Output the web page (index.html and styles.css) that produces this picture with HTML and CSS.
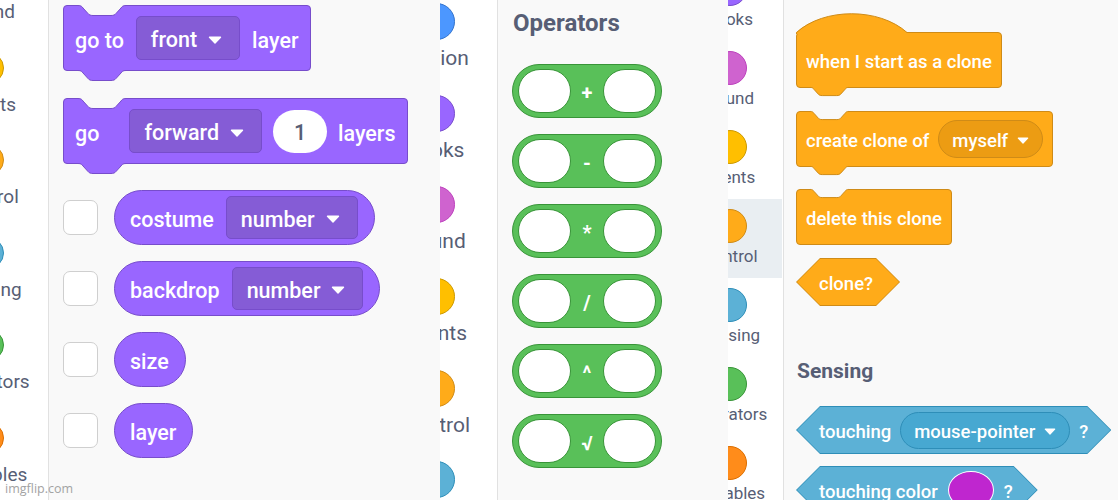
FILE: index.html
```html
<!DOCTYPE html>
<html>
<head>
<meta charset="utf-8">
<title>Scratch blocks</title>
<link rel="stylesheet" href="styles.css">
</head>
<body>
<main class="collage">

  <!-- Shot 1: Looks -->
  <section class="shot s1">
    <nav class="cats">
      <div class="cat"><span class="dot sound"></span><span class="lbl">Sound</span></div>
      <div class="cat"><span class="dot events"></span><span class="lbl">Events</span></div>
      <div class="cat"><span class="dot control"></span><span class="lbl">Control</span></div>
      <div class="cat"><span class="dot sensing"></span><span class="lbl">Sensing</span></div>
      <div class="cat"><span class="dot operators"></span><span class="lbl">Operators</span></div>
      <div class="cat"><span class="dot variables"></span><span class="lbl">Variables</span></div>
    </nav>
    <div class="ws">
      <div class="stack looks b-goto">
        <svg class="notch top" viewBox="0 0 48 11" preserveAspectRatio="none"><path class="nf" d="M0,0 H48 V0.5 C45,0.5 44,1.5 43,3 L38,8.5 C37,9.8 35.5,10.5 33,10.5 H15 C12.5,10.5 11,9.8 10,8.5 L5,3 C4,1.5 3,0.5 0,0.5 Z"/><path class="nl" d="M0,0.5 C3,0.5 4,1.5 5,3 L10,8.5 C11,9.8 12.5,10.5 15,10.5 H33 C35.5,10.5 37,9.8 38,8.5 L43,3 C44,1.5 45,0.5 48,0.5"/></svg>
        <span class="t">go to</span>
        <span class="dd">front <svg class="arr" viewBox="0 0 14 8"><path d="M1.5 1.2h11L7 7z"/></svg></span>
        <span class="t">layer</span>
        <svg class="notch bot" viewBox="0 0 48 11" preserveAspectRatio="none"><path class="nf" d="M0,0 H48 V0.5 C45,0.5 44,1.5 43,3 L38,8.5 C37,9.8 35.5,10.5 33,10.5 H15 C12.5,10.5 11,9.8 10,8.5 L5,3 C4,1.5 3,0.5 0,0.5 Z"/><path class="nl" d="M0,0.5 C3,0.5 4,1.5 5,3 L10,8.5 C11,9.8 12.5,10.5 15,10.5 H33 C35.5,10.5 37,9.8 38,8.5 L43,3 C44,1.5 45,0.5 48,0.5"/></svg>
      </div>
      <div class="stack looks b-go">
        <svg class="notch top" viewBox="0 0 48 11" preserveAspectRatio="none"><path class="nf" d="M0,0 H48 V0.5 C45,0.5 44,1.5 43,3 L38,8.5 C37,9.8 35.5,10.5 33,10.5 H15 C12.5,10.5 11,9.8 10,8.5 L5,3 C4,1.5 3,0.5 0,0.5 Z"/><path class="nl" d="M0,0.5 C3,0.5 4,1.5 5,3 L10,8.5 C11,9.8 12.5,10.5 15,10.5 H33 C35.5,10.5 37,9.8 38,8.5 L43,3 C44,1.5 45,0.5 48,0.5"/></svg>
        <span class="t wide">go</span>
        <span class="dd">forward <svg class="arr" viewBox="0 0 14 8"><path d="M1.5 1.2h11L7 7z"/></svg></span>
        <span class="num">1</span>
        <span class="t">layers</span>
        <svg class="notch bot" viewBox="0 0 48 11" preserveAspectRatio="none"><path class="nf" d="M0,0 H48 V0.5 C45,0.5 44,1.5 43,3 L38,8.5 C37,9.8 35.5,10.5 33,10.5 H15 C12.5,10.5 11,9.8 10,8.5 L5,3 C4,1.5 3,0.5 0,0.5 Z"/><path class="nl" d="M0,0.5 C3,0.5 4,1.5 5,3 L10,8.5 C11,9.8 12.5,10.5 15,10.5 H33 C35.5,10.5 37,9.8 38,8.5 L43,3 C44,1.5 45,0.5 48,0.5"/></svg>
      </div>
      <div class="rows">
        <div class="row"><span class="chk"></span><div class="rep looks"><span class="t">costume</span><span class="dd">number <svg class="arr" viewBox="0 0 14 8"><path d="M1.5 1.2h11L7 7z"/></svg></span></div></div>
        <div class="row"><span class="chk"></span><div class="rep looks"><span class="t">backdrop</span><span class="dd">number <svg class="arr" viewBox="0 0 14 8"><path d="M1.5 1.2h11L7 7z"/></svg></span></div></div>
        <div class="row"><span class="chk"></span><div class="rep looks"><span class="t">size</span></div></div>
        <div class="row"><span class="chk"></span><div class="rep looks"><span class="t">layer</span></div></div>
      </div>
    </div>
    <span class="watermark">imgflip.com</span>
  </section>

  <!-- Shot 2: Operators -->
  <section class="shot s2">
    <nav class="cats">
      <div class="cat"><span class="dot motion"></span><span class="lbl">Motion</span></div>
      <div class="cat"><span class="dot looks-c"></span><span class="lbl">Looks</span></div>
      <div class="cat"><span class="dot sound"></span><span class="lbl">Sound</span></div>
      <div class="cat"><span class="dot events"></span><span class="lbl">Events</span></div>
      <div class="cat"><span class="dot control"></span><span class="lbl">Control</span></div>
      <div class="cat"><span class="dot sensing"></span><span class="lbl">Sensing</span></div>
    </nav>
    <div class="ws">
      <h2 class="title">Operators</h2>
      <div class="ops">
        <div class="op"><span class="slot"></span><span class="sym">+</span><span class="slot"></span></div>
        <div class="op"><span class="slot"></span><span class="sym">-</span><span class="slot"></span></div>
        <div class="op"><span class="slot"></span><span class="sym">*</span><span class="slot"></span></div>
        <div class="op"><span class="slot"></span><span class="sym">/</span><span class="slot"></span></div>
        <div class="op"><span class="slot"></span><span class="sym">^</span><span class="slot"></span></div>
        <div class="op"><span class="slot"></span><span class="sym">√</span><span class="slot"></span></div>
      </div>
    </div>
  </section>

  <!-- Shot 3: Control / Sensing -->
  <section class="shot s3">
    <nav class="cats">
      <div class="cat"><span class="dot looks-c"></span><span class="lbl">Looks</span></div>
      <div class="cat"><span class="dot sound"></span><span class="lbl">Sound</span></div>
      <div class="cat"><span class="dot events"></span><span class="lbl">Events</span></div>
      <div class="cat sel"><span class="dot control"></span><span class="lbl">Control</span></div>
      <div class="cat"><span class="dot sensing"></span><span class="lbl">Sensing</span></div>
      <div class="cat"><span class="dot operators"></span><span class="lbl">Operators</span></div>
      <div class="cat"><span class="dot variables"></span><span class="lbl">Variables</span></div>
    </nav>
    <div class="ws">
      <div class="stack control hat">
        <svg class="cap" viewBox="0 0 111 21"><path class="cf" d="M0,21 L0,19.5 C28,-5.5 83,-5.5 111,19.5 L111,21 Z"/><path class="cl" d="M0.5,21 L0.5,19.5 C28,-5.5 83,-5.5 111,19.5"/></svg>
        <span class="t">when I start as a clone</span>
        <svg class="notch bot" viewBox="0 0 48 11" preserveAspectRatio="none"><path class="nf" d="M0,0 H48 V0.5 C45,0.5 44,1.5 43,3 L38,8.5 C37,9.8 35.5,10.5 33,10.5 H15 C12.5,10.5 11,9.8 10,8.5 L5,3 C4,1.5 3,0.5 0,0.5 Z"/><path class="nl" d="M0,0.5 C3,0.5 4,1.5 5,3 L10,8.5 C11,9.8 12.5,10.5 15,10.5 H33 C35.5,10.5 37,9.8 38,8.5 L43,3 C44,1.5 45,0.5 48,0.5"/></svg>
      </div>
      <div class="stack control b-create">
        <svg class="notch top" viewBox="0 0 48 11" preserveAspectRatio="none"><path class="nf" d="M0,0 H48 V0.5 C45,0.5 44,1.5 43,3 L38,8.5 C37,9.8 35.5,10.5 33,10.5 H15 C12.5,10.5 11,9.8 10,8.5 L5,3 C4,1.5 3,0.5 0,0.5 Z"/><path class="nl" d="M0,0.5 C3,0.5 4,1.5 5,3 L10,8.5 C11,9.8 12.5,10.5 15,10.5 H33 C35.5,10.5 37,9.8 38,8.5 L43,3 C44,1.5 45,0.5 48,0.5"/></svg>
        <span class="t">create clone of</span>
        <span class="dd pill">myself <svg class="arr" viewBox="0 0 14 8"><path d="M1.5 1.2h11L7 7z"/></svg></span>
        <svg class="notch bot" viewBox="0 0 48 11" preserveAspectRatio="none"><path class="nf" d="M0,0 H48 V0.5 C45,0.5 44,1.5 43,3 L38,8.5 C37,9.8 35.5,10.5 33,10.5 H15 C12.5,10.5 11,9.8 10,8.5 L5,3 C4,1.5 3,0.5 0,0.5 Z"/><path class="nl" d="M0,0.5 C3,0.5 4,1.5 5,3 L10,8.5 C11,9.8 12.5,10.5 15,10.5 H33 C35.5,10.5 37,9.8 38,8.5 L43,3 C44,1.5 45,0.5 48,0.5"/></svg>
      </div>
      <div class="stack control b-delete">
        <svg class="notch top" viewBox="0 0 48 11" preserveAspectRatio="none"><path class="nf" d="M0,0 H48 V0.5 C45,0.5 44,1.5 43,3 L38,8.5 C37,9.8 35.5,10.5 33,10.5 H15 C12.5,10.5 11,9.8 10,8.5 L5,3 C4,1.5 3,0.5 0,0.5 Z"/><path class="nl" d="M0,0.5 C3,0.5 4,1.5 5,3 L10,8.5 C11,9.8 12.5,10.5 15,10.5 H33 C35.5,10.5 37,9.8 38,8.5 L43,3 C44,1.5 45,0.5 48,0.5"/></svg>
        <span class="t">delete this clone</span>
      </div>
      <div class="bool control b-clone"><span class="t">clone?</span></div>
      <h2 class="title">Sensing</h2>
      <div class="bool sensing b-touch">
        <span class="t">touching</span>
        <span class="dd pill">mouse-pointer <svg class="arr" viewBox="0 0 14 8"><path d="M1.5 1.2h11L7 7z"/></svg></span>
        <span class="t">?</span>
      </div>
      <div class="bool sensing b-color">
        <span class="t">touching color</span>
        <span class="swatch"></span>
        <span class="t">?</span>
      </div>
    </div>
  </section>

</main>
</body>
</html>
```

FILE: styles.css
```css
* { box-sizing: border-box; }

body {
  margin: 0;
  font-family: Roboto, "Liberation Sans", sans-serif;
  background: #f9f9f9;
}

.collage {
  display: flex;
  width: 1118px;
  height: 500px;
  overflow: hidden;
}

.shot {
  position: relative;
  display: flex;
  height: 500px;
  overflow: hidden;
  flex: none;
}
.s1 { width: 440px; }
.s2 { width: 288px; }
.s3 { width: 390px; }

/* ---------- category strips ---------- */
.cats {
  flex: none;
  display: flex;
  flex-direction: column;
  background: #fff;
  border-right: 1px solid #e1e1e1;
  overflow: hidden;
}
.cat {
  flex: none;
  display: flex;
  flex-direction: column;
  align-items: center;
}
.dot {
  flex: none;
  border-radius: 50%;
  border: 1px solid;
}
.lbl {
  color: #575e75;
  white-space: nowrap;
}

.dot.motion    { background: #4c97ff; border-color: #3373cc; }
.dot.looks-c   { background: #9966ff; border-color: #774dcb; }
.dot.sound     { background: #cf63cf; border-color: #bd42bd; }
.dot.events    { background: #ffbf00; border-color: #cc9900; }
.dot.control   { background: #ffab19; border-color: #cf8b17; }
.dot.sensing   { background: #5cb1d6; border-color: #2e8eb8; }
.dot.operators { background: #59c059; border-color: #389438; }
.dot.variables { background: #ff8c1a; border-color: #db6e00; }

.s1 .cats { width: 49px; }
.s1 .cat { width: 100px; margin-left: -62px; height: 92.5px; }
.s1 .cat:first-child { margin-top: -41px; }
.s1 .dot { width: 32px; height: 32px; }
.s1 .lbl { margin-top: 10px; font-size: 19px; line-height: 22px; }

.s2 .cats { width: 58px; }
.s2 .cat { width: 100px; margin-left: -54px; height: 91.7px; }
.s2 .cat:first-child { margin-top: 3px; }
.s2 .dot { width: 37px; height: 37px; }
.s2 .lbl { margin-top: 6px; font-size: 21px; line-height: 24px; }

.s3 .cats { width: 56px; }
.s3 .cat { width: 104px; margin-left: -50px; height: 79px; padding-top: 10px; }
.s3 .cat:first-child { margin-top: -38.5px; }
.s3 .cat.sel { background: #e9eef2; }
.s3 .dot { width: 34px; height: 34px; }
.s3 .lbl { margin-top: 3px; font-size: 17px; line-height: 20px; }

/* ---------- workspaces ---------- */
.ws {
  flex: 1;
  display: flex;
  flex-direction: column;
  align-items: flex-start;
  background: #f9f9f9;
}
.s1 .ws { padding: 5px 0 0 14px; }
.s2 .ws { padding: 9px 0 0 14px; }
.s3 .ws { padding: 32px 0 0 12px; }

.t {
  color: #fff;
  font-weight: 500;
  white-space: nowrap;
  padding-top: 4px;
}

/* generic stack block */
.stack {
  position: relative;
  display: flex;
  align-items: center;
  flex: none;
  border: 1px solid;
  border-radius: 4px;
}
.stack.looks, .rep.looks { background: #9966ff; border-color: #774dcb; }
.stack.control { background: #ffab19; border-color: #cf8b17; }

.notch {
  position: absolute;
  overflow: visible;
}
.notch .nl {
  fill: none;
  stroke-width: 1;
  vector-effect: non-scaling-stroke;
}
.notch.top { top: -1px; }
.notch.bot { top: 100%; }
.notch.top .nf { fill: #f9f9f9; }
.looks .notch.bot .nf { fill: #9966ff; }
.control .notch.bot .nf { fill: #ffab19; }
.looks .notch .nl { stroke: #774dcb; }
.control .notch .nl { stroke: #cf8b17; }

.s1 .notch { left: 14px; width: 48px; height: 11px; }
.s3 .notch { left: 13px; width: 39px; height: 9px; }

/* dropdowns */
.dd {
  display: flex;
  align-items: center;
  flex: none;
  border: 1px solid;
  color: #fff;
  font-weight: 500;
  white-space: nowrap;
  padding-top: 3px;
}
.looks .dd { background: #855cd6; border-color: #774dcb; border-radius: 5px; }
.control .dd { background: #ec9c13; border-color: #cf8b17; }
.sensing .dd { background: #47a8d1; border-color: #2e8eb8; }
.dd.pill { border-radius: 20px; }

.arr {
  flex: none;
}
.arr path {
  fill: #fff;
  stroke: #fff;
  stroke-width: 1.4;
  stroke-linejoin: round;
}

/* shot 1 sizes */
.s1 .stack {
  height: 66px;
  padding: 0 11px;
  gap: 12px;
  font-size: 21.5px;
}
.s1 .b-goto { margin-bottom: 27px; }
.s1 .b-go { margin-bottom: 26px; gap: 11px; }
.s1 .t.wide { margin-right: 19px; }
.s1 .dd {
  height: 44px;
  padding-left: 14px;
  padding-right: 17px;
  gap: 11px;
  font-size: 21.5px;
}
.s1 .arr { width: 14px; height: 8px; }

.num {
  display: flex;
  align-items: center;
  justify-content: center;
  width: 54px;
  height: 43px;
  padding-top: 3px;
  border-radius: 22px;
  background: #fff;
  color: #575e75;
  font-weight: 500;
}

.rows {
  display: flex;
  flex-direction: column;
  gap: 16px;
}
.row {
  display: flex;
  align-items: center;
  gap: 16px;
}
.chk {
  width: 35px;
  height: 35px;
  border: 1.5px solid #cfcfcf;
  border-radius: 7px;
  background: #fff;
  flex: none;
}
.rep {
  display: flex;
  align-items: center;
  height: 55px;
  padding: 0 16px 0 15px;
  gap: 12px;
  border: 1px solid;
  border-radius: 28px;
  font-size: 21.5px;
}
.rep .dd { height: 43px; }

.watermark {
  position: absolute;
  left: 5px;
  bottom: 3px;
  font-size: 12.5px;
  color: #a3a3a3;
  font-family: "Open Sans", Roboto, sans-serif;
}

/* shot 2: operators */
.title {
  margin: 0;
  color: #575e75;
  font-weight: 700;
  white-space: nowrap;
}
.s2 .title {
  font-size: 24px;
  line-height: 28px;
  margin-left: 1px;
}
.ops {
  display: flex;
  flex-direction: column;
  align-items: flex-start;
  gap: 16px;
  margin-top: 27px;
}
.op {
  display: flex;
  align-items: center;
  height: 54px;
  padding: 0 5px;
  gap: 10px;
  background: #59c059;
  border: 1px solid #389438;
  border-radius: 27px;
}
.slot {
  width: 53px;
  height: 44px;
  border-radius: 22px;
  background: #fff;
  border: 1px solid #389438;
  flex: none;
}
.sym {
  color: #fff;
  font-weight: 700;
  font-size: 20px;
  min-width: 12px;
  text-align: center;
  padding-top: 4px;
}

/* shot 3: control / sensing */
.s3 .stack {
  height: 56px;
  padding: 0 9px;
  gap: 9px;
  font-size: 18.5px;
}
.s3 .dd {
  height: 38px;
  padding-left: 13px;
  padding-right: 13px;
  gap: 9px;
  font-size: 18.5px;
}
.s3 .arr { width: 12px; height: 7px; }

.cap {
  position: absolute;
  left: -1px;
  top: -20px;
  width: 111px;
  height: 21px;
  overflow: visible;
}
.cap .cf { fill: #ffab19; }
.cap .cl { fill: none; stroke: #cf8b17; stroke-width: 1; }

.hat { margin-bottom: 23px; }
.b-create { margin-bottom: 22px; }
.b-delete { margin-bottom: 13px; }

.bool {
  position: relative;
  isolation: isolate;
  display: flex;
  align-items: center;
  flex: none;
  height: 48px;
  font-size: 18.5px;
}
.bool::before,
.bool::after {
  content: "";
  position: absolute;
  z-index: -1;
}
.bool::before {
  inset: 0;
  clip-path: polygon(24px 0, calc(100% - 24px) 0, 100% 50%, calc(100% - 24px) 100%, 24px 100%, 0 50%);
}
.bool::after {
  inset: 1px;
  clip-path: polygon(23px 0, calc(100% - 23px) 0, 100% 50%, calc(100% - 23px) 100%, 23px 100%, 0 50%);
}
.bool.control::before { background: #cf8b17; }
.bool.control::after { background: #ffab19; }
.bool.sensing::before { background: #2e8eb8; }
.bool.sensing::after { background: #5cb1d6; }

.b-clone {
  padding: 0 27px 0 23px;
  margin-bottom: 53px;
}
.s3 .title {
  font-size: 21px;
  line-height: 25px;
  margin-left: 1px;
  margin-bottom: 22px;
}
.b-touch {
  padding: 0 23px 0 23px;
  gap: 9px;
  margin-bottom: 12px;
}
.b-touch .dd { height: 37px; }
.b-color {
  padding: 0 25px 0 23px;
  gap: 10px;
}
.swatch {
  width: 46px;
  height: 38px;
  border-radius: 50%;
  background: #bf26cf;
  border: 1.5px solid #fff;
  flex: none;
}
```
